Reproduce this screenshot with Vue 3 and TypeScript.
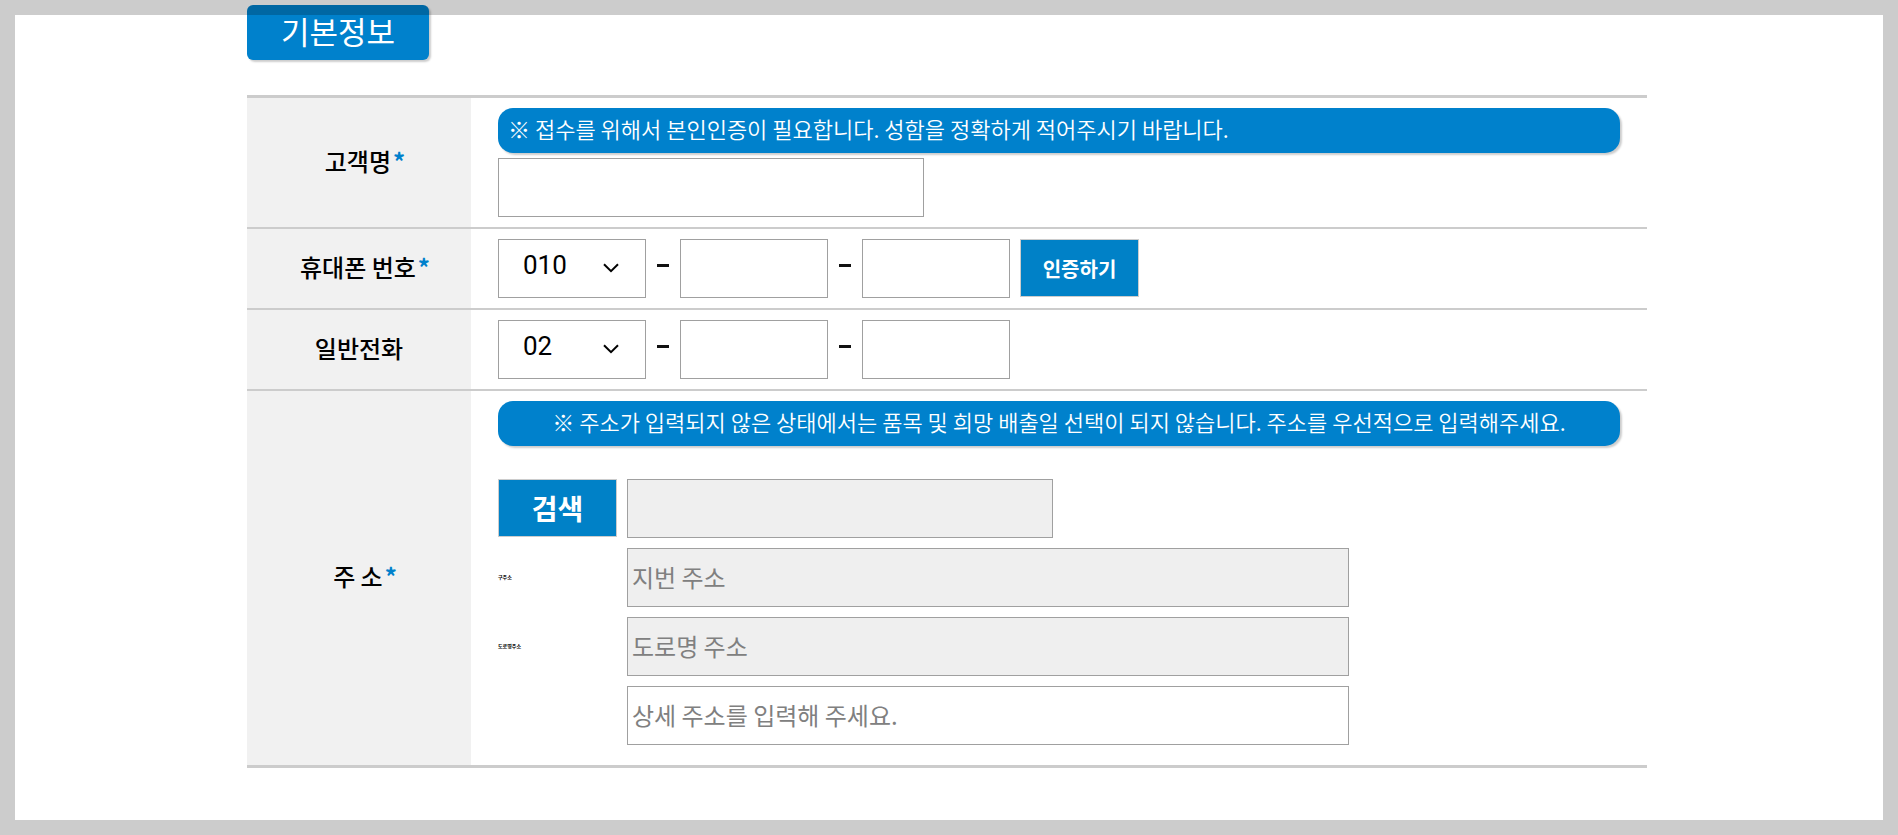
<script setup lang="ts">
import { reactive } from 'vue'

interface PhoneRow {
  id: string
  label: string
  required: boolean
  prefixes: string[]
  verify: boolean
}

interface AddressLine {
  id: string
  caption: string
  placeholder: string
  readonly: boolean
}

const phoneRows: PhoneRow[] = [
  { id: 'mobile', label: '휴대폰 번호', required: true, prefixes: ['010', '011', '016', '017', '018', '019'], verify: true },
  { id: 'phone', label: '일반전화', required: false, prefixes: ['02', '031', '032', '033'], verify: false },
]

const addressLines: AddressLine[] = [
  { id: 'jibun', caption: '구주소', placeholder: '지번 주소', readonly: true },
  { id: 'road', caption: '도로명주소', placeholder: '도로명 주소', readonly: true },
  { id: 'detail', caption: '', placeholder: '상세 주소를 입력해 주세요.', readonly: false },
]

const form = reactive({
  name: '',
  zip: '',
  phones: {
    mobile: { prefix: '010', middle: '', last: '' },
    phone: { prefix: '02', middle: '', last: '' },
  } as Record<string, { prefix: string; middle: string; last: string }>,
  address: { jibun: '', road: '', detail: '' } as Record<string, string>,
})
</script>

<template>
  <main class="page">
    <form class="content" @submit.prevent>
      <h2 class="section-title">기본정보</h2>

      <table class="form-table">
        <tbody>
          <tr>
            <th scope="row"><label for="name">고객명<span class="required">*</span></label></th>
            <td>
              <p class="notice">※ 접수를 위해서 본인인증이 필요합니다. 성함을 정확하게 적어주시기 바랍니다.</p>
              <input id="name" v-model="form.name" class="field field-medium" type="text" />
            </td>
          </tr>

          <tr v-for="row in phoneRows" :key="row.id">
            <th scope="row">
              <label :for="row.id">{{ row.label }}<span v-if="row.required" class="required">*</span></label>
            </th>
            <td>
              <div class="line">
                <div class="select-box">
                  <select :id="row.id" v-model="form.phones[row.id].prefix" class="field">
                    <option v-for="prefix in row.prefixes" :key="prefix" :value="prefix">{{ prefix }}</option>
                  </select>
                  <svg class="chevron" viewBox="0 0 16 10" aria-hidden="true">
                    <path d="M1 1.2 L8 8.2 L15 1.2" />
                  </svg>
                </div>
                <span class="dash" aria-hidden="true"></span>
                <input v-model="form.phones[row.id].middle" class="field field-short" type="text" :aria-label="row.label + ' 가운데 자리'" />
                <span class="dash" aria-hidden="true"></span>
                <input v-model="form.phones[row.id].last" class="field field-short" type="text" :aria-label="row.label + ' 끝자리'" />
                <button v-if="row.verify" class="action" type="button">인증하기</button>
              </div>
            </td>
          </tr>

          <tr class="address-row">
            <th scope="row"><label for="zip">주 소<span class="required">*</span></label></th>
            <td>
              <p class="notice notice-center">
                ※ 주소가 입력되지 않은 상태에서는 품목 및 희망 배출일 선택이 되지 않습니다. 주소를 우선적으로 입력해주세요.
              </p>
              <div class="address">
                <div class="line">
                  <button class="action action-search" type="button">검색</button>
                  <input id="zip" v-model="form.zip" class="field field-medium" type="text" readonly />
                </div>
                <div v-for="line in addressLines" :key="line.id" class="line">
                  <label class="caption" :for="line.id">{{ line.caption }}</label>
                  <input
                    :id="line.id"
                    v-model="form.address[line.id]"
                    class="field field-long"
                    type="text"
                    :placeholder="line.placeholder"
                    :readonly="line.readonly"
                  />
                </div>
              </div>
            </td>
          </tr>
        </tbody>
      </table>
    </form>
    <div class="frame" aria-hidden="true"></div>
  </main>
</template>

<style>
body {
  margin: 0;
  background: #fff;
}
</style>

<style scoped>
.page {
  box-sizing: border-box;
  min-height: 100vh;
  padding: 5px 20px 20px 16px;
  font-family: "Noto Sans CJK KR", "Noto Sans", sans-serif;
  color: #000;
}

.frame {
  position: fixed;
  inset: 0;
  border: 15px solid rgba(0, 0, 0, 0.2);
  pointer-events: none;
}

.content {
  max-width: 1400px;
  margin: 0 auto;
}

.section-title {
  box-sizing: border-box;
  width: fit-content;
  margin: 0 0 35px;
  padding: 0 34px 4px;
  border-radius: 6px;
  background: #0081cc;
  box-shadow: 2px 2px 2px rgba(0, 0, 0, 0.2);
  color: #fff;
  font-size: 31px;
  font-weight: 400;
  line-height: 51px;
}

.form-table {
  width: 100%;
  border-collapse: separate;
  border-spacing: 0;
  border-top: 3px solid #ccc;
  border-bottom: 1px solid #ccc;
  table-layout: fixed;
}

th,
td {
  border-bottom: 2px solid #ccc;
}

th {
  width: 16%;
  padding: 0 0 4px;
  background: #f1f1f1;
  font-size: 24px;
  font-weight: 500;
  line-height: 36px;
}

td {
  padding: 10px 27px;
}

.address-row td {
  padding-bottom: 20px;
}

/* The mark hangs outside the label so that the name itself stays centred. */
.required {
  margin: 0 -12px 0 2px;
  color: #0081cc;
  font-weight: 700;
}

.notice {
  margin: 0 0 5px;
  padding: 0 10px 4px;
  border-radius: 15px;
  background: #0081cc;
  box-shadow: 2px 2px 2px rgba(0, 0, 0, 0.2);
  color: #fff;
  font-size: 22px;
  font-weight: 350;
  line-height: 41px;
}

.notice-center {
  margin-bottom: 33px;
  text-align: center;
}

.line {
  display: flex;
  gap: 10px;
}

.address {
  display: grid;
  gap: 10px;
}

.field {
  display: block;
  box-sizing: border-box;
  height: 59px;
  padding: 0 4px 2px;
  border: 1px solid #a0a0a0;
  border-radius: 0;
  background: #fff;
  color: #000;
  font-family: inherit;
  font-size: 24px;
}

.field:read-only:not(select) {
  background: #efefef;
}

.field::placeholder {
  color: #808080;
}

.field-short,
.select-box {
  width: 148px;
}

.field-medium {
  width: 426px;
}

.field-long {
  width: 722px;
}

.select-box {
  position: relative;
}

.select-box select {
  width: 100%;
  padding: 0 36px 8px 24px;
  appearance: none;
  font-family: Roboto, "Noto Sans", sans-serif;
  font-size: 26px;
}

.chevron {
  position: absolute;
  top: 24px;
  right: 27px;
  width: 16px;
  height: 10px;
  fill: none;
  stroke: #000;
  stroke-width: 2;
  pointer-events: none;
}

.dash {
  width: 12px;
  height: 3px;
  margin: 25px 1px 0;
  background: #111;
}

.action {
  box-sizing: border-box;
  width: 119px;
  height: 58px;
  padding: 0;
  border: 1px solid #ccc;
  background: #0081c7;
  color: #fff;
  font-family: inherit;
  font-size: 20px;
  font-weight: 700;
}

.action-search {
  font-size: 28px;
}

.caption {
  width: 119px;
  font-size: 5px;
  font-weight: 700;
  line-height: 57px;
}
</style>
